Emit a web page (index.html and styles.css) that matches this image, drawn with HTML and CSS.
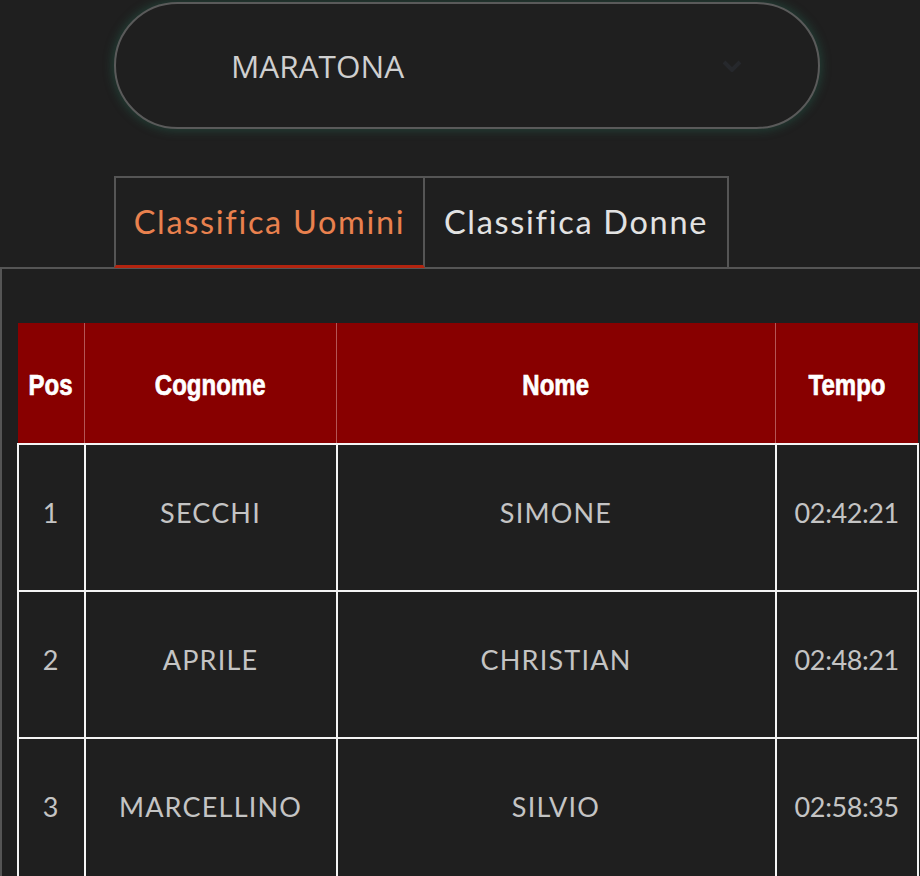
FILE: index.html
```html
<!DOCTYPE html>
<html lang="it">
<head>
<meta charset="utf-8">
<title>Classifica Maratona</title>
<link rel="stylesheet" href="styles.css">
</head>
<body>
<div class="page">
  <div class="select">
    <span class="select-label">MARATONA</span>
    <svg class="chevron" width="20" height="12" viewBox="0 0 20 12"><path d="M2 2 L10 10 L18 2" fill="none" stroke="#26282c" stroke-width="4"/></svg>
  </div>
  <div class="tabs">
    <div class="tab active">Classifica Uomini</div>
    <div class="tab">Classifica Donne</div>
  </div>
  <div class="panel">
    <table class="ranking">
      <thead>
        <tr>
          <th class="c-pos"><span class="th-label">Pos</span></th>
          <th class="c-cog"><span class="th-label">Cognome</span></th>
          <th class="c-nome"><span class="th-label">Nome</span></th>
          <th class="c-tempo"><span class="th-label">Tempo</span></th>
        </tr>
      </thead>
      <tbody>
        <tr><td>1</td><td>SECCHI</td><td>SIMONE</td><td class="time">02:42:21</td></tr>
        <tr><td>2</td><td>APRILE</td><td>CHRISTIAN</td><td class="time">02:48:21</td></tr>
        <tr><td>3</td><td>MARCELLINO</td><td>SILVIO</td><td class="time">02:58:35</td></tr>
      </tbody>
    </table>
  </div>
</div>
</body>
</html>
```
FILE: styles.css
```css
html, body {
  margin: 0;
  padding: 0;
  background: #1f1f1f;
  overflow: hidden;
}
.page {
  width: 920px;
  height: 876px;
  overflow: hidden;
  padding-top: 2px;
  box-sizing: border-box;
}
.select {
  margin-left: 114px;
  width: 706px;
  height: 127px;
  box-sizing: border-box;
  border: 2px solid #5a5a5a;
  border-radius: 64px;
  background: #1f1f1f;
  box-shadow: 0 0 10px 2px rgba(40, 120, 95, 0.35);
  display: flex;
  align-items: center;
  padding-left: 115px;
  padding-right: 76px;
  justify-content: space-between;
}
.select-label {
  font-family: "Open Sans", sans-serif;
  font-size: 31.5px;
  color: #cfcfcf;
}
.chevron { display: block; }
.tabs {
  display: flex;
  margin-left: 114px;
  margin-top: 47px;
}
.tab {
  height: 92px;
  box-sizing: border-box;
  border: 2px solid #555;
  border-bottom: none;
  display: flex;
  align-items: center;
  justify-content: center;
  font-family: "Lato", sans-serif;
  font-size: 32.5px;
  letter-spacing: 1.7px;
  color: #e2e2e2;
  padding-bottom: 4px;
}
.tab:first-child { width: 311px; }
.tab + .tab { width: 304px; border-left: none; }
.tab.active {
  color: #e9814e;
  border-bottom: 3px solid #b3240f;
  padding-bottom: 1px;
}
.panel {
  border-top: 2px solid #555;
  border-left: 2px solid #555;
  padding: 54px 0 0 15px;
  margin-top: -1px;
}
.ranking {
  border-collapse: collapse;
  width: 902px;
  font-family: "Lato", sans-serif;
}
.ranking th {
  background: #880000;
  color: #fff;
  height: 116px;
  padding: 4px 0 0;
  font-family: "Liberation Sans", sans-serif;
  font-weight: bold;
  font-size: 30px;
  border-left: 1px solid #b45555;
  border-right: 1px solid #b45555;
}
.th-label {
  display: inline-block;
  transform: scaleX(0.8);
  -webkit-text-stroke: 0.7px #fff;
}
.ranking th:first-child { border-left: none; }
.ranking th:last-child { border-right: none; }
.c-pos { width: 66px; }
.c-cog { width: 251px; }
.c-nome { width: 438px; }
.ranking td {
  border: 2px solid #f4f4f4;
  height: 135px;
  padding: 0 0 10px;
  text-align: center;
  color: #c4c4c4;
  font-size: 27px;
  letter-spacing: 1.2px;
}
.ranking td.time {
  letter-spacing: -0.4px;
}
```
